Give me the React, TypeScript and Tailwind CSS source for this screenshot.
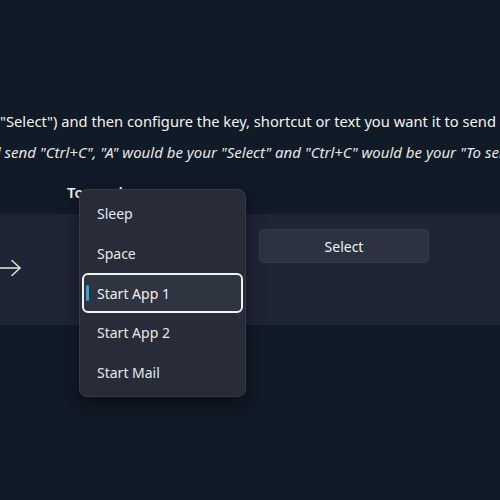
const menuItems = ["Sleep", "Space", "Start App 1", "Start App 2", "Start Mail"];

function ArrowIcon() {
  return (
    <svg width="22" height="18" viewBox="0 0 22 18" fill="none" stroke="#e8e8e8" strokeWidth="1.4" strokeLinecap="round" strokeLinejoin="round">
      <path d="M-2 9H20" />
      <path d="M12 1.5L20 9L12 16.5" />
    </svg>
  );
}

function KeyMenu() {
  return (
    <div className="absolute left-[79px] top-[189px] w-[167px] rounded-[8px] border border-[#343a48] bg-[#272c38] px-[2px] py-[4px] shadow-[0_8px_20px_rgba(0,0,0,0.45)]">
      {menuItems.map((item) => {
        const selected = item === "Start App 1";
        return (
          <div
            key={item}
            className={
              selected
                ? "relative flex h-[40px] items-center rounded-[6px] border-2 border-[#f2f2f2] bg-[#2f3441] pl-[13px] text-[14px] text-[#f0f0f0]"
                : "relative flex h-[39.5px] items-center pl-[15px] text-[14px] text-[#e8e8e8]"
            }
          >
            {selected && (
              <span className="absolute left-[2px] top-[10px] h-[16px] w-[3px] rounded-full bg-[#2ea8dd]" />
            )}
            {item}
          </div>
        );
      })}
    </div>
  );
}

export default function App() {
  return (
    <div
      className="relative h-[500px] w-[500px] overflow-hidden bg-[#111a27] text-[#f2f2f2]"
      style={{ fontFamily: '"Noto Sans", "Open Sans", sans-serif' }}
    >
      <div className="pt-[110px]">
        <p className="whitespace-nowrap text-[14.7px] leading-[22px]">
          "Select") and then configure the key, shortcut or text you want it to send ("To send").
        </p>
        <p className="mt-[9px] -ml-[8px] whitespace-nowrap text-[15px] italic leading-[22px] text-[#e6e6e6]">
          d send "Ctrl+C", "A" would be your "Select" and "Ctrl+C" would be your "To send".
        </p>
        <p className="mt-[19px] pl-[67px] text-[15px] font-semibold leading-[20px]">To send:</p>
        <div className="mt-[12px] flex h-[111px] items-start bg-[#1e2535]">
          <div className="mt-[45px] shrink-0">
            <ArrowIcon />
          </div>
          <div className="ml-[237px] mt-[15px] flex h-[34px] w-[170px] items-center justify-center rounded-[5px] border border-[#363b49] bg-[#2d3240] text-[14px] text-[#f0f0f0]">
            Select
          </div>
        </div>
      </div>
      <KeyMenu />
    </div>
  );
}
